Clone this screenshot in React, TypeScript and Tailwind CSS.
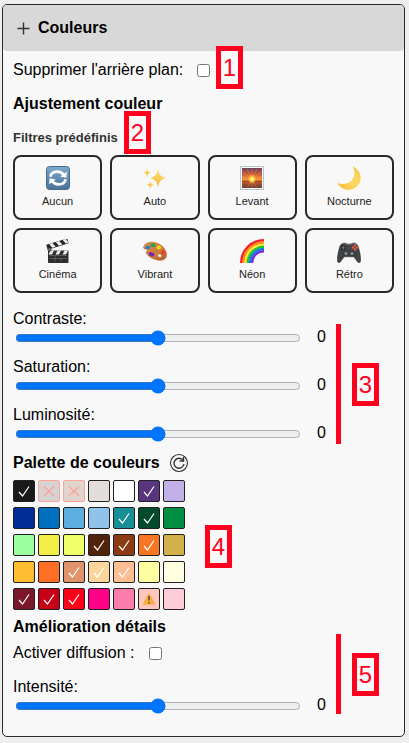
import { useState } from "react";
import type { ReactNode } from "react";

function ResetIcon() {
  return (
    <svg viewBox="0 0 24 24" className="size-6" aria-hidden="true">
      <defs>
        <linearGradient id="resetBg" x1="0" y1="0" x2="0" y2="1">
          <stop offset="0" stopColor="#7fa9cc" />
          <stop offset="1" stopColor="#4a7397" />
        </linearGradient>
      </defs>
      <rect x="0.5" y="0.5" width="23" height="23" rx="3" fill="url(#resetBg)" stroke="#456c8e" />
      <g fill="none" stroke="#fff" strokeWidth="2.6">
        <path d="M4.300 10.800C5 7.300 8.200 5.600 11.500 5.600c2.800 0 5 1.300 6.300 3.400" />
        <path d="M19.700 13.200c-.7 3.500-3.900 5.200-7.200 5.200-2.800 0-5-1.300-6.300-3.400" />
      </g>
      <path d="M20.800 5.800l-.4 6-6.200-1.200z" fill="#fff" />
      <path d="M3.200 18.200l.4-6 6.200 1.200z" fill="#fff" />
    </svg>
  );
}

function SparklesIcon() {
  return (
    <svg viewBox="0 0 24 24" className="size-6" aria-hidden="true">
      <defs>
        <linearGradient id="spark" x1="0" y1="0" x2="0" y2="1">
          <stop offset="0" stopColor="#ffdf70" />
          <stop offset="1" stopColor="#fbb53c" />
        </linearGradient>
      </defs>
      <g fill="url(#spark)">
        <path d="M15 2.200c.8 6.300 2.700 8.900 8.700 9.900-6 1-7.900 3.600-8.700 9.900-.8-6.300-2.700-8.900-8.700-9.900 6-1 7.900-3.600 8.700-9.900z" />
        <path d="M4.200 2.500c.4 2.700 1.300 3.800 3.700 4.300-2.400.5-3.300 1.600-3.700 4.300C3.800 8.400 2.900 7.300.5 6.800c2.400-.5 3.300-1.600 3.700-4.300z" />
        <path d="M7.200 14.500c.4 2.700 1.300 3.800 3.600 4.300-2.300.5-3.200 1.600-3.600 4.300-.4-2.700-1.300-3.800-3.600-4.300 2.300-.5 3.200-1.600 3.600-4.300z" />
      </g>
    </svg>
  );
}

function SunriseIcon() {
  return (
    <svg viewBox="0 0 24 24" className="size-6" aria-hidden="true">
      <defs>
        <linearGradient id="dawn" x1="0" y1="0" x2="0" y2="1">
          <stop offset="0" stopColor="#6b4262" />
          <stop offset="0.3" stopColor="#c95a3c" />
          <stop offset="0.6" stopColor="#f99a32" />
          <stop offset="0.63" stopColor="#c9632d" />
          <stop offset="1" stopColor="#6d3b35" />
        </linearGradient>
        <radialGradient id="sun">
          <stop offset="0" stopColor="#fff7b0" />
          <stop offset="0.4" stopColor="#ffd43f" />
          <stop offset="1" stopColor="#ff9d24" stopOpacity="0" />
        </radialGradient>
      </defs>
      <rect x="0.5" y="0.5" width="23" height="23" fill="#f4f8f8" stroke="#b6c7c9" />
      <rect x="2" y="2" width="20" height="20" fill="url(#dawn)" />
      <g stroke="#ffa040" strokeWidth="0.7" opacity="0.5">
        <path d="M12 13V3M12 13L7 3M12 13l5-10M12 13L2.500 6M12 13l9.500-7M12 13L2 10M12 13l10-3M12 14l-5 8M12 14l5 8M12 14v8" />
      </g>
      <circle cx="12" cy="13" r="5" fill="url(#sun)" />
      <circle cx="12" cy="13.500" r="1.800" fill="#fff08a" />
      <path d="M2 15.500h7M15 15.500h7" stroke="#93482c" strokeWidth="0.800" />
    </svg>
  );
}

function MoonIcon() {
  return (
    <svg viewBox="0 0 24 24" className="size-6" aria-hidden="true">
      <defs>
        <linearGradient id="moon" x1="0" y1="1" x2="1" y2="0">
          <stop offset="0" stopColor="#f5b82e" />
          <stop offset="0.5" stopColor="#ffd965" />
          <stop offset="1" stopColor="#f6c64a" />
        </linearGradient>
      </defs>
      <path d="M15.500.4C20.500 2.300 23.700 6.700 23.700 12c0 6.700-5.200 11.700-11.900 11.700-4.900 0-9.400-2.600-11.400-6.800 5 2.200 11.400 1.100 14.700-3.200 2.900-3.800 3-9 .4-13.300z" fill="url(#moon)" />
    </svg>
  );
}

function ClapperIcon() {
  return (
    <svg viewBox="0 0 24 24" className="size-6" aria-hidden="true">
      <g transform="rotate(-17 2 10)">
        <rect x="1.500" y="5.500" width="22" height="5" rx="0.800" fill="#292929" />
        <path d="M4.500 5.500h3.500l2 4.500H6.500zM11.500 5.500H15l2 4.500h-3.500zM18.500 5.500H22l1.500 4.500h-3z" fill="#ededed" />
      </g>
      <path d="M2 11.500h20.500V23q0 1-1 1H3q-1 0-1-1z" fill="#2d2d2d" />
      <path d="M4.500 11.500H8L6 15.500H2.500zM11.500 11.500H15l-2 4H9.500zM18.500 11.500H22l-2 4h-3.500z" fill="#ededed" />
      <path d="M3.500 16.500H21M3.500 19.500H21M9 16.500v6M15 19.500v3" stroke="#656565" strokeWidth="0.800" />
      <circle cx="3.500" cy="10.500" r="1.700" fill="#777" stroke="#222" strokeWidth="0.600" />
    </svg>
  );
}

function PaletteIcon() {
  return (
    <svg viewBox="0 0 24 24" className="size-6" aria-hidden="true">
      <defs>
        <linearGradient id="wood" x1="0" y1="0" x2="1" y2="1">
          <stop offset="0" stopColor="#d58c48" />
          <stop offset="0.6" stopColor="#ce7c38" />
          <stop offset="1" stopColor="#a9592a" />
        </linearGradient>
      </defs>
      <path d="M.7 7.800C1.700 3.900 6.500 2.300 12 3.600c6.700 1.600 11.500 6.700 11.500 12.100 0 4.300-3.500 6.300-8.400 5.500-5-.8-9.200-3-11.500-6.500-.9-1.400-.5-2 .4-2.600.9-.6.800-1.600-.8-1.800C1.200 10 .2 9.600.7 7.800zM15.500 15c-1.300.4-1.100 2.200.3 3 1.400.8 3 .2 2.800-1.200-.2-1.300-1.700-2.200-3.100-1.800z" fill="url(#wood)" fillRule="evenodd" stroke="#ad6329" strokeWidth="0.500" />
      <ellipse cx="4.800" cy="8.500" rx="2.300" ry="1.700" fill="#287bd3" />
      <ellipse cx="9.900" cy="6.400" rx="2.600" ry="1.800" fill="#22a74b" />
      <ellipse cx="15.800" cy="8.500" rx="2.300" ry="1.900" fill="#f3d31e" />
      <ellipse cx="19.900" cy="13.500" rx="2.100" ry="1.900" fill="#eb3d2d" transform="rotate(40 20 13.500)" />
      <ellipse cx="8.700" cy="15.400" rx="2.900" ry="2" fill="#7127b4" transform="rotate(20 9 15)" />
    </svg>
  );
}

function RainbowIcon() {
  return (
    <svg viewBox="0 0 24 24" className="size-6" aria-hidden="true">
      <g fill="none" strokeWidth="2.400">
        <path d="M1.200 24C1.200 12 10.500 1.300 24 1.300" stroke="#f5202e" />
        <path d="M3.400 24C3.400 13 12 3.500 24 3.500" stroke="#ff8b16" />
        <path d="M5.500 24C5.500 14.200 13.200 5.600 24 5.600" stroke="#ffe62c" />
        <path d="M7.700 24C7.700 15.400 14.500 7.800 24 7.800" stroke="#22c32e" />
        <path d="M9.900 24C9.900 16.600 15.800 10 24 10" stroke="#137be8" />
        <path d="M12 24c0-6.200 5.100-11.800 12-11.800" stroke="#7730d8" />
      </g>
    </svg>
  );
}

function GamepadIcon() {
  return (
    <svg viewBox="0 0 24 24" className="size-6" aria-hidden="true">
      <path d="M5 4.700q2-1.200 4.100-.3l1 .6h3.800l1-.6q2.100-.9 4.100.3l1.700 1.500c1.500 4.100 3.100 10.300 2.900 15.500-.1 2-1.700 2.700-2.900 1.400l-3.900-5.300H7.200l-3.900 5.300C2.100 24.400.5 23.700.4 21.700.2 16.500 1.800 10.300 3.300 6.200z" fill="#414345" stroke="#252628" strokeWidth="0.500" />
      <path d="M4.700 5q2.500-1.500 5 .5h4.600q2.500-2 5-.5" fill="none" stroke="#77797b" strokeWidth="0.800" />
      <circle cx="6.300" cy="8.800" r="2.500" fill="#222425" />
      <path d="M6.300 7v3.600M4.500 8.800h3.600" stroke="#76797c" />
      <circle cx="9" cy="14.500" r="2.500" fill="#626568" stroke="#242628" strokeWidth="0.700" />
      <circle cx="15" cy="14.500" r="2.500" fill="#626568" stroke="#242628" strokeWidth="0.700" />
      <circle cx="9" cy="14.500" r="0.900" fill="#a0a5a7" />
      <circle cx="15" cy="14.500" r="0.900" fill="#a0a5a7" />
      <g fill="#f05b45">
        <circle cx="18" cy="6.500" r="1.200" />
        <circle cx="20" cy="8.500" r="1.200" />
        <circle cx="18" cy="10.500" r="1.200" />
        <circle cx="16" cy="8.500" r="1.200" />
      </g>
    </svg>
  );
}

const filters: { label: string; icon: ReactNode }[] = [
  { label: "Aucun", icon: <ResetIcon /> },
  { label: "Auto", icon: <SparklesIcon /> },
  { label: "Levant", icon: <SunriseIcon /> },
  { label: "Nocturne", icon: <MoonIcon /> },
  { label: "Cinéma", icon: <ClapperIcon /> },
  { label: "Vibrant", icon: <PaletteIcon /> },
  { label: "Néon", icon: <RainbowIcon /> },
  { label: "Rétro", icon: <GamepadIcon /> },
];

type Mark = "check" | "cross" | "warning";

const swatches: { color: string; mark?: Mark }[] = [
  { color: "bg-[#1a1a1a]", mark: "check" },
  { color: "bg-[#d7d3d2]", mark: "cross" },
  { color: "bg-[#dfd5cc]", mark: "cross" },
  { color: "bg-[#e3dddc]" },
  { color: "bg-white" },
  { color: "bg-[#59357f]", mark: "check" },
  { color: "bg-[#c2b1e8]" },
  { color: "bg-[#002d96]" },
  { color: "bg-[#0071bf]" },
  { color: "bg-[#5eaddf]" },
  { color: "bg-[#90c2ea]" },
  { color: "bg-[#188e96]", mark: "check" },
  { color: "bg-[#004a2d]", mark: "check" },
  { color: "bg-[#008f42]" },
  { color: "bg-[#9cff9f]" },
  { color: "bg-[#f3ee47]" },
  { color: "bg-[#edff69]" },
  { color: "bg-[#51230b]", mark: "check" },
  { color: "bg-[#8b3a13]", mark: "check" },
  { color: "bg-[#f67624]", mark: "check" },
  { color: "bg-[#d2b04a]" },
  { color: "bg-[#ffbd31]" },
  { color: "bg-[#ff7024]" },
  { color: "bg-[#e1946b]", mark: "check" },
  { color: "bg-[#ffd59c]", mark: "check" },
  { color: "bg-[#ffbf92]", mark: "check" },
  { color: "bg-[#ffffa1]" },
  { color: "bg-[#ffffe1]" },
  { color: "bg-[#7a172b]", mark: "check" },
  { color: "bg-[#c70017]", mark: "check" },
  { color: "bg-[#ff001b]", mark: "check" },
  { color: "bg-[#ff0087]" },
  { color: "bg-[#ff7dab]" },
  { color: "bg-[#ffc6bd]", mark: "warning" },
  { color: "bg-[#ffccd9]" },
];

function SwatchMark({ mark }: { mark: Mark }) {
  if (mark === "warning") {
    return (
      <svg viewBox="0 0 20 20" className="size-5" aria-hidden="true">
        <path d="M10 5L15.500 15H4.500z" fill="#fbad42" stroke="#fbad42" strokeWidth="1.500" strokeLinejoin="round" />
        <path d="M10 7v4.500M10 13v1.600" stroke="#6c5237" strokeWidth="1.700" />
      </svg>
    );
  }
  return (
    <svg viewBox="0 0 20 20" className="size-5" fill="none" aria-hidden="true">
      {mark === "check" ? (
        <path d="M5 11l3.500 4L15 5.500" stroke="#fff" strokeWidth="1.200" />
      ) : (
        <path d="M5 5.500l10 9.500M15 5.500L5 15" stroke="#ffa29c" strokeWidth="1.300" />
      )}
    </svg>
  );
}

function SliderRow({ id, label }: { id: string; label: string }) {
  const [value, setValue] = useState(0);
  return (
    <div>
      <label htmlFor={id} className="block leading-5">{label}</label>
      <div className="mt-px flex h-4">
        <input
          id={id}
          type="range"
          min={-100}
          max={100}
          value={value}
          onChange={(e) => setValue(Number(e.target.value))}
          className="m-0 ml-0.5 h-4 min-w-0 flex-1 accent-[#0075ff]"
        />
        <output htmlFor={id} className="ml-4 w-[77px] leading-[14px]">{value}</output>
      </div>
    </div>
  );
}

function Callout({ n, place }: { n: number; place: string }) {
  return (
    <span
      className={`pointer-events-none absolute flex h-[43px] w-[27px] items-center justify-center border-[5px] border-[#ff001e] bg-[#f8f8f8] text-2xl leading-8 text-[#ff001e] ${place}`}
    >
      {n}
    </span>
  );
}

export default function App() {
  const [open, setOpen] = useState(true);
  return (
    <div className="flow-root min-h-screen bg-[#eeeeee] font-['Liberation_Sans',Arial,sans-serif] text-base text-black">
      <main className="relative mt-1 mr-1 mb-1.5 ml-0.5 rounded-[5px] border border-[#292929] bg-[#f8f8f8]">
        <button
          type="button"
          aria-expanded={open}
          onClick={() => setOpen(!open)}
          className="flex h-[46px] w-full items-center gap-2 rounded bg-[#d8d8d8] pl-3.5 font-bold"
        >
          <svg viewBox="0 0 13 13" className="size-[13px]" aria-hidden="true">
            <path d="M6.500 0.500v12M0.500 6.500h12" stroke="#333" strokeWidth="1.400" />
          </svg>
          Couleurs
        </button>
        {open && (
          <div className="px-2.5 pt-[7px] pb-[22px]">
            <div className="flex h-6 items-center gap-3.5">
              <label htmlFor="background">Supprimer l'arrière plan:</label>
              <input id="background" type="checkbox" className="size-[13px]" />
            </div>

            <h2 className="mt-2.5 leading-6 font-bold">Ajustement couleur</h2>
            <h3 className="mt-3 text-[13px] leading-5 font-bold text-[#333]">Filtres prédéfinis</h3>
            <div className="mt-[7px] grid grid-cols-4 gap-2">
              {filters.map((f) => (
                <button
                  key={f.label}
                  type="button"
                  className="flex h-[65px] flex-col items-center gap-[3px] rounded-lg border-2 border-[#292929] pt-[9px] text-[11px] leading-4 text-[#222]"
                >
                  {f.icon}
                  {f.label}
                </button>
              ))}
            </div>

            <div className="mt-4 flex flex-col gap-[11px]">
              <SliderRow id="contrast" label="Contraste:" />
              <SliderRow id="saturation" label="Saturation:" />
              <SliderRow id="brightness" label="Luminosité:" />
            </div>

            <div className="mt-[9px] flex h-6 items-center gap-[9px]">
              <h2 className="font-bold">Palette de couleurs</h2>
              <button type="button" aria-label="Réinitialiser la palette">
                <svg viewBox="0 0 20 20" className="size-5" fill="none" stroke="#333" aria-hidden="true">
                  <circle cx="10" cy="10" r="8.500" strokeWidth="1.100" />
                  <path d="M14.200 7.500A5 5 0 1 0 15 11" strokeWidth="1.400" />
                  <path d="M14.500 4v4h-4" strokeWidth="1.400" />
                </svg>
              </button>
            </div>
            <div className="mt-[5px] grid grid-cols-[repeat(7,22px)] gap-x-[3px] gap-y-[5px]">
              {swatches.map((s, i) => (
                <button
                  key={i}
                  type="button"
                  aria-label={`Couleur ${i + 1}`}
                  disabled={s.mark === "cross"}
                  className={`flex size-[22px] items-center justify-center rounded-[2px] border ${s.mark === "cross" ? "border-[#ffa29c]" : "border-[#222]"} ${s.color}`}
                >
                  {s.mark && <SwatchMark mark={s.mark} />}
                </button>
              ))}
            </div>

            <h2 className="mt-[5px] leading-6 font-bold">Amélioration détails</h2>
            <div className="mt-0.5 mb-3 flex h-6 items-center gap-3.5">
              <label htmlFor="diffusion">Activer diffusion :</label>
              <input id="diffusion" type="checkbox" className="size-[13px]" />
            </div>
            <SliderRow id="intensity" label="Intensité:" />
          </div>
        )}

        <Callout n={1} place="top-[41px] left-[213px]" />
        <Callout n={2} place="top-[106px] left-[121px]" />
        <Callout n={3} place="top-[358px] left-[349px]" />
        <Callout n={4} place="top-[520px] left-[202px]" />
        <Callout n={5} place="top-[648px] left-[349px]" />
        <span className="absolute top-[319px] left-[333px] h-[120px] w-[5px] bg-[#ff001e]" />
        <span className="absolute top-[629px] left-[333px] h-[80px] w-[5px] bg-[#ff001e]" />
      </main>
    </div>
  );
}
